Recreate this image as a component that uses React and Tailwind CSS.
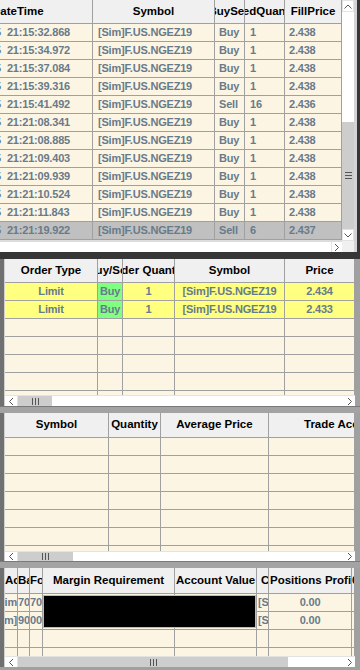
import React from 'react';

const HEAD = 'text-[11.5px] font-bold text-black whitespace-nowrap';
const CELL = 'text-[11px] font-bold tracking-[-0.2px] text-[#687b8b] whitespace-nowrap';
const CREAM = 'bg-[#fdf5e3]';

const FILLS = [
  ['21:15:32.868', 'Buy', '1', '2.438'],
  ['21:15:34.972', 'Buy', '1', '2.438'],
  ['21:15:37.084', 'Buy', '1', '2.438'],
  ['21:15:39.316', 'Buy', '1', '2.438'],
  ['21:15:41.492', 'Sell', '16', '2.436'],
  ['21:21:08.341', 'Buy', '1', '2.438'],
  ['21:21:08.885', 'Buy', '1', '2.438'],
  ['21:21:09.403', 'Buy', '1', '2.438'],
  ['21:21:09.939', 'Buy', '1', '2.438'],
  ['21:21:10.524', 'Buy', '1', '2.438'],
  ['21:21:11.843', 'Buy', '1', '2.438'],
  ['21:21:19.922', 'Sell', '6', '2.437'],
];

const ORDERS = [
  { type: 'Limit', side: 'Buy', qty: '1', symbol: '[Sim]F.US.NGEZ19', price: '2.434' },
  { type: 'Limit', side: 'Buy', qty: '1', symbol: '[Sim]F.US.NGEZ19', price: '2.433' },
];

const ORDER_COLS = ['w-[93px]', 'w-[25px]', 'w-[52px]', 'w-[110px]', 'flex-1'];
const POS_COLS = ['w-[104px]', 'w-[52px]', 'w-[108px]', 'flex-1'];
const ACC_COLS = ['w-[13px]', 'w-[12px]', 'w-[13px]', 'w-[132px]', 'w-[82px]', 'w-[12px]', 'w-[83px]', 'flex-1'];

function Chevron({ dir }) {
  const rot = { up: 'rotate-0', down: 'rotate-180', left: '-rotate-90', right: 'rotate-90' }[dir];
  return (
    <svg className={rot} width="8" height="5" viewBox="0 0 8 5">
      <path d="M0.5 4.5 L4 1 L7.5 4.5" fill="none" stroke="#555" strokeWidth="1" />
    </svg>
  );
}

function GripV() {
  return (
    <div className="flex gap-[2px]">
      <span className="w-px h-[7px] bg-[#555]" />
      <span className="w-px h-[7px] bg-[#555]" />
      <span className="w-px h-[7px] bg-[#555]" />
    </div>
  );
}

function GripH() {
  return (
    <div className="flex flex-col gap-[2px]">
      <span className="w-[7px] h-px bg-[#555]" />
      <span className="w-[7px] h-px bg-[#555]" />
      <span className="w-[7px] h-px bg-[#555]" />
    </div>
  );
}

function Cell({ w, className = '', children }) {
  return (
    <div className={`${w} shrink-0 h-full flex items-center overflow-hidden border-r border-[#a0a0a0] ${className}`}>
      {children}
    </div>
  );
}

function HScroll({ h, thumb }) {
  return (
    <div className={`${h} shrink-0 flex bg-white border-t border-[#e3e3e3]`}>
      <div className="w-[13px] flex items-center justify-center border-r border-[#e3e3e3]">
        <Chevron dir="left" />
      </div>
      <div className={`${thumb} bg-[#cdcdcd] flex items-center justify-center`}>
        <GripV />
      </div>
      <div className="flex-1" />
      <div className="w-[10px] flex items-center justify-center">
        <Chevron dir="right" />
      </div>
    </div>
  );
}

function EmptyRows({ cols, count }) {
  return Array.from({ length: count }).map((_, i) => (
    <div key={i} className={`h-[18px] shrink-0 flex border-b border-[#a0a0a0] ${CREAM}`}>
      {cols.map((w, j) => <Cell key={j} w={w} />)}
    </div>
  ));
}

function FillsPanel() {
  return (
    <div className="h-[252px] shrink-0 flex">
      <div className="w-[342px] flex flex-col">
        <div className="h-[24px] shrink-0 flex bg-[#f0f0f0] border-b border-[#a0a0a0]">
          <Cell w="w-[93px]"><span className={`${HEAD} ml-[-8px]`}>DateTime</span></Cell>
          <Cell w="w-[122px]" className="justify-center"><span className={HEAD}>Symbol</span></Cell>
          <Cell w="w-[30px]" className="justify-center"><span className={HEAD}>BuySell</span></Cell>
          <Cell w="w-[40px]" className="justify-center"><span className={HEAD}>FilledQuantity</span></Cell>
          <Cell w="w-[57px]" className="justify-center"><span className={HEAD}>FillPrice</span></Cell>
        </div>
        {FILLS.map(([time, side, qty, price], i) => (
          <div
            key={time}
            className={`h-[18px] shrink-0 flex border-b border-[#a0a0a0] ${i === FILLS.length - 1 ? 'bg-[#c0c0c0]' : CREAM}`}
          >
            <Cell w="w-[93px]">
              <span className={`${CELL} ml-[-5px] text-[#5a9ad0]`}>5</span>
              <span className={`${CELL} ml-[6px]`}>{time}</span>
            </Cell>
            <Cell w="w-[122px]" className="pl-[5px]"><span className={CELL}>[Sim]F.US.NGEZ19</span></Cell>
            <Cell w="w-[30px]" className="pl-[4px]"><span className={CELL}>{side}</span></Cell>
            <Cell w="w-[40px]" className="pl-[5px]"><span className={CELL}>{qty}</span></Cell>
            <Cell w="w-[57px]" className="pl-[4px]"><span className={CELL}>{price}</span></Cell>
          </div>
        ))}
        <div className="flex-1 flex bg-white border-t-2 border-[#dcdcdc]">
          <div className="flex-1" />
          <div className="w-[11px] flex items-center justify-center border-l border-[#e3e3e3]">
            <Chevron dir="right" />
          </div>
        </div>
      </div>
      <div className="w-[12px] flex flex-col bg-white">
        <div className="h-[12px] shrink-0 flex items-center justify-center border border-[#e3e3e3]">
          <Chevron dir="up" />
        </div>
        <div className="h-[110px] shrink-0" />
        <div className="h-[107px] shrink-0 bg-[#cdcdcd] flex items-center justify-center">
          <GripH />
        </div>
        <div className="h-[12px] shrink-0 flex items-center justify-center border border-[#e3e3e3]">
          <Chevron dir="down" />
        </div>
        <div className="flex-1 bg-[#f0f0f0]" />
      </div>
      <div className="w-[3px] bg-[#d4d4d4]" />
      <div className="w-[3px] bg-[#363636]" />
    </div>
  );
}

function Frame({ h, children }) {
  return (
    <div className={`${h} shrink-0 flex`}>
      <div className="w-[4px] bg-[#707070]" />
      <div className="w-px bg-[#d0d0d0]" />
      <div className={`w-[350px] flex flex-col overflow-hidden ${CREAM}`}>{children}</div>
      <div className="w-[5px] bg-[#a0a0a0]" />
    </div>
  );
}

function OrdersPanel() {
  const heads = ['Order Type', 'Buy/Sell', 'Order Quantity', 'Symbol', 'Price'];
  return (
    <Frame h="h-[147px]">
      <div className="h-[24px] shrink-0 flex bg-[#f0f0f0] border-b border-[#a0a0a0]">
        {heads.map((t, i) => (
          <Cell key={t} w={ORDER_COLS[i]} className="justify-center"><span className={HEAD}>{t}</span></Cell>
        ))}
      </div>
      {ORDERS.map((o) => (
        <div key={o.price} className="h-[18px] shrink-0 flex border-b border-[#a0a0a0] bg-[#ffff80]">
          <Cell w={ORDER_COLS[0]} className="justify-center"><span className={CELL}>{o.type}</span></Cell>
          <Cell w={ORDER_COLS[1]} className="justify-center bg-[#80ff80]"><span className={CELL}>{o.side}</span></Cell>
          <Cell w={ORDER_COLS[2]} className="justify-center"><span className={CELL}>{o.qty}</span></Cell>
          <Cell w={ORDER_COLS[3]} className="justify-center"><span className={CELL}>{o.symbol}</span></Cell>
          <Cell w={ORDER_COLS[4]} className="justify-center"><span className={CELL}>{o.price}</span></Cell>
        </div>
      ))}
      <EmptyRows cols={ORDER_COLS} count={4} />
      <div className="flex-1 flex">
        {ORDER_COLS.map((w, j) => <Cell key={j} w={w} />)}
      </div>
      <HScroll h="h-[11px]" thumb="w-[34px]" />
    </Frame>
  );
}

function PositionsPanel() {
  return (
    <Frame h="h-[148px]">
      <div className="h-[25px] shrink-0 flex bg-[#f0f0f0] border-b border-[#a0a0a0]">
        <Cell w={POS_COLS[0]} className="justify-center"><span className={HEAD}>Symbol</span></Cell>
        <Cell w={POS_COLS[1]} className="justify-center"><span className={HEAD}>Quantity</span></Cell>
        <Cell w={POS_COLS[2]} className="justify-center"><span className={HEAD}>Average Price</span></Cell>
        <Cell w={POS_COLS[3]} className="pl-[35px]"><span className={HEAD}>Trade Account</span></Cell>
      </div>
      <EmptyRows cols={POS_COLS} count={6} />
      <div className="flex-1 flex">
        {POS_COLS.map((w, j) => <Cell key={j} w={w} />)}
      </div>
      <HScroll h="h-[10px]" thumb="w-[55px]" />
    </Frame>
  );
}

function AccountPanel() {
  const rows = [
    { ac: '[Sim', ba: '70700', fo: '70700' },
    { ac: '[Sim]', ba: '90000', fo: '00000' },
  ];
  return (
    <Frame h="h-[99px]">
      <div className="h-[26px] shrink-0 flex bg-[#f0f0f0] border-b border-[#a0a0a0]">
        <Cell w={ACC_COLS[0]}><span className={HEAD}>Account</span></Cell>
        <Cell w={ACC_COLS[1]}><span className={HEAD}>Balance</span></Cell>
        <Cell w={ACC_COLS[2]}><span className={HEAD}>Forced</span></Cell>
        <Cell w={ACC_COLS[3]} className="justify-center"><span className={HEAD}>Margin Requirement</span></Cell>
        <Cell w={ACC_COLS[4]} className="pl-[1px]"><span className={HEAD}>Account Value :</span></Cell>
        <Cell w={ACC_COLS[5]} className="pl-[4px]"><span className={HEAD}>Currency</span></Cell>
        <Cell w={ACC_COLS[6]} className="pl-[1px]"><span className={HEAD}>Positions Profit(USD)</span></Cell>
        <Cell w={ACC_COLS[7]}><span className={HEAD}>0</span></Cell>
      </div>
      <div className="relative">
        {rows.map((r, i) => (
          <div key={i} className={`h-[18px] flex border-b border-[#a0a0a0] ${CREAM}`}>
            <Cell w={ACC_COLS[0]} className="justify-end"><span className={`${CELL} text-[#4f8fcb]`}>{r.ac}</span></Cell>
            <Cell w={ACC_COLS[1]}><span className={CELL}>{r.ba}</span></Cell>
            <Cell w={ACC_COLS[2]}><span className={CELL}>{r.fo}</span></Cell>
            <Cell w={ACC_COLS[3]} />
            <Cell w={ACC_COLS[4]} />
            <Cell w={ACC_COLS[5]} className="pl-[1px]"><span className={`${CELL} text-[#4f8fcb]`}>[Sim]</span></Cell>
            <Cell w={ACC_COLS[6]} className="justify-center"><span className={CELL}>0.00</span></Cell>
            <Cell w={ACC_COLS[7]} />
          </div>
        ))}
        <div className="absolute left-[38px] top-[1px] w-[213px] h-[33px] bg-black border border-[#cbbd98]" />
      </div>
      <EmptyRows cols={ACC_COLS} count={1} />
      <div className="flex-1 flex">
        {ACC_COLS.map((w, j) => <Cell key={j} w={w} />)}
      </div>
      <HScroll h="h-[11px]" thumb="w-[270px]" />
    </Frame>
  );
}

export default function App() {
  return (
    <div className="w-[360px] h-[670px] overflow-hidden flex flex-col bg-[#a0a0a0] font-['Liberation_Sans',Arial,sans-serif]">
      <FillsPanel />
      <div className="h-[7px] shrink-0 bg-[#363636]" />
      <OrdersPanel />
      <div className="h-[7px] shrink-0 bg-[#a3a3a3] border-t border-[#7a7a7a]" />
      <PositionsPanel />
      <div className="h-[7px] shrink-0 bg-[#a3a3a3] border-t border-[#7a7a7a]" />
      <AccountPanel />
      <div className="flex-1 bg-[#a0a0a0]" />
    </div>
  );
}
